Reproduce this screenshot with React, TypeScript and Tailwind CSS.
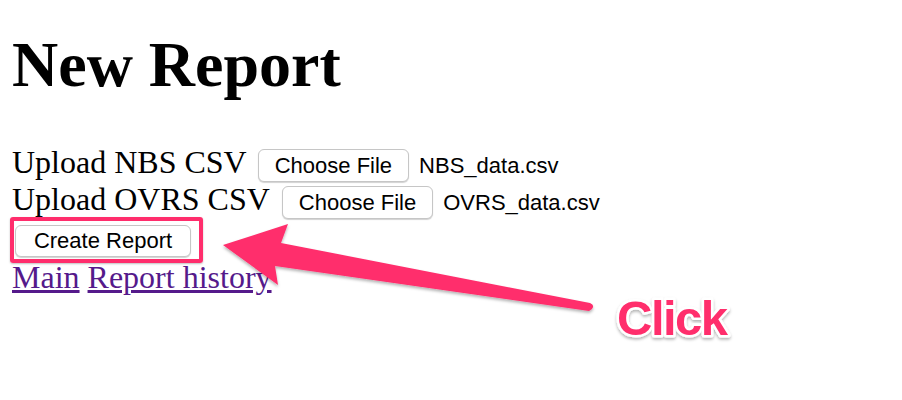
import React from "react";

const PINK = "#ff2d6c";

const FileButton = ({ className = "" }: { className?: string }) => (
  <button
    className={`h-[33px] px-[16px] bg-white border border-[#c6c6c6] rounded-[6px] shadow-[0_1px_1px_rgba(0,0,0,0.18)] text-[22px] leading-none text-black font-['Liberation_Sans',sans-serif] ${className}`}
  >
    Choose File
  </button>
);

const UploadRow = ({ label, file, gap }: { label: string; file: string; gap: string }) => (
  <div className="flex items-start h-[37px]">
    <span className="text-[32px] leading-[37px] whitespace-nowrap">{label}</span>
    <FileButton className={`mt-[5px] ${gap}`} />
    <span className="ml-[10px] mt-[5px] h-[33px] flex items-center text-[22px] font-['Liberation_Sans',sans-serif]">
      {file}
    </span>
  </div>
);

const Overlay = () => (
  <svg className="absolute inset-0 pointer-events-none" width="902" height="400" viewBox="0 0 902 400">
    <defs>
      <filter id="sh" x="-10%" y="-30%" width="120%" height="160%">
        <feDropShadow dx="0" dy="2" stdDeviation="1.5" floodColor="#000" floodOpacity="0.3" />
      </filter>
    </defs>
    <path
      d="M223 245 L288 224 L281 243 L590 303 Q595 305 592 309 L589 311 L275 266 L278 285 Z"
      fill={PINK}
      filter="url(#sh)"
    />
    <text
      x="617"
      y="335"
      fontFamily="'Liberation Sans', Arial, sans-serif"
      fontWeight="700"
      fontSize="49"
      letterSpacing="-1.5"
      fill={PINK}
      stroke="#fff"
      strokeWidth="5"
      strokeLinejoin="round"
      paintOrder="stroke"
      filter="url(#sh)"
    >
      Click
    </text>
  </svg>
);

export default function App() {
  return (
    <div className="relative w-[902px] h-[400px] bg-white text-black font-['Liberation_Serif',serif] px-[12px] overflow-hidden">
      <h1 className="mt-[33px] text-[64px] leading-[64px] font-bold">New Report</h1>

      <div className="mt-[47px]">
        <UploadRow label="Upload NBS CSV" file="NBS_data.csv" gap="ml-[11px]" />
        <UploadRow label="Upload OVRS CSV" file="OVRS_data.csv" gap="ml-[12px]" />

        <div className="h-[41px] flex items-start">
          <div className="relative ml-[3px] mt-[7px]">
            <button className="h-[32px] w-[176px] bg-white border border-[#c6c6c6] rounded-[6px] shadow-[0_1px_1px_rgba(0,0,0,0.18)] text-[22px] leading-none text-black font-['Liberation_Sans',sans-serif]">
              Create Report
            </button>
            <div className="absolute left-[-5px] top-[-8px] w-[193px] h-[46px] border-[4px] border-[#ff2d6c] rounded-[3px] shadow-[0_1px_2px_rgba(0,0,0,0.25)] pointer-events-none" />
          </div>
        </div>

        <div className="text-[32px] leading-[37px]">
          <a href="#" className="text-[#551a8b] underline">Main</a>{" "}
          <a href="#" className="text-[#551a8b] underline">Report history</a>
        </div>
      </div>

      <Overlay />
    </div>
  );
}
